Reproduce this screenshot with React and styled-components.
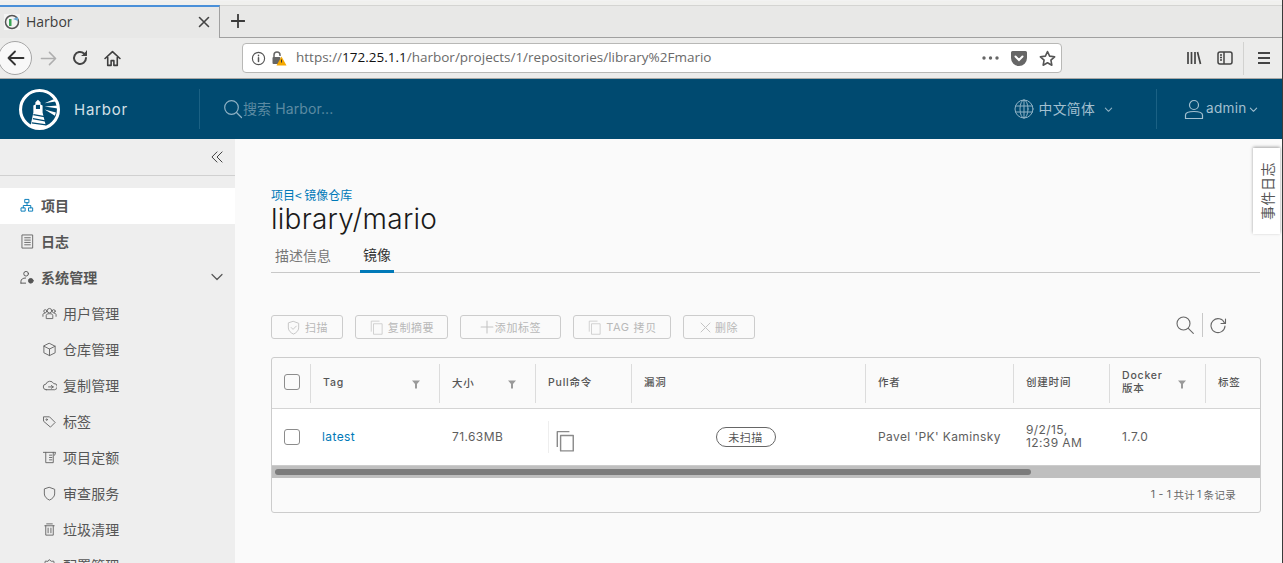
import React from "react";
import styled, { createGlobalStyle } from "styled-components";

const cjk = `"Noto Sans CJK SC", sans-serif`;
const ui = `Inter, "Noto Sans CJK SC", sans-serif`;

const Global = createGlobalStyle`
  html, body { margin: 0; padding: 0; height: 100%; overflow: hidden; background: #fafafa; }
  * { box-sizing: border-box; }
`;

const Page = styled.div`
  width: 1283px; height: 563px; display: flex; flex-direction: column; overflow: hidden;
  font-family: ${ui}; position: relative; border-right: 1px solid #3a3a3a;
`;

/* ---- browser chrome ---- */
const TabStrip = styled.div`
  height: 38px; flex: none; background: #e8e8e7; border-top: 1px solid #f2f2f2;
  display: flex; align-items: stretch; padding-top: 4px; box-shadow: inset 0 4px 0 #f0f0ee, inset 0 5px 0 #d4d4d2;
  border-bottom: 1px solid #a0a0a0;
`;
const BrowserTab = styled.div`
  width: 220px; margin-bottom: -1px; margin-top: 0; background: #e8e8e7; border-top: 2px solid #4a90d9;
  border-right: 1px solid #a0a0a0; display: flex; align-items: center; padding: 0 9px 2px 4px;
  font: 14px "Open Sans", sans-serif; color: #3d3d3d; gap: 6px;
`;
const TabTitle = styled.span` flex: 1; `;
const NewTab = styled.div` width: 36px; display: flex; align-items: center; justify-content: center; `;
const NavBar = styled.div`
  height: 41px; flex: none; background: #ececeb; border-bottom: 1px solid #a8a8a6;
  display: flex; align-items: center; position: relative; padding-left: 32px;
`;
const BackButton = styled.div`
  position: absolute; left: -2px; top: 3px; width: 34px; height: 34px; border-radius: 50%;
  background: #f8f8f8; border: 1px solid #a6a6a6; display: flex; align-items: center; justify-content: center; padding-left: 1px;
`;
const NavIcon = styled.div` width: 32px; height: 32px; display: flex; align-items: center; justify-content: center; `;
const UrlBar = styled.div`
  margin-left: 114px; width: 820px; height: 30px; background: #fff; border: 1px solid #b8b8b6; border-radius: 4px;
  display: flex; align-items: center; padding: 0 5px 0 8px; font: 13.5px "Open Sans", sans-serif; color: #6a6a6a;
`;
const UrlText = styled.div` flex: 1; margin-left: 9px; margin-top: -2px; white-space: nowrap; b { font-weight: 400; color: #111; } `;
const UrlIcons = styled.div` display: flex; align-items: center; gap: 12px; `;
const BrowserRight = styled.div` margin-left: 116px; display: flex; align-items: center; `;
const BrowserIcon = styled.div` width: 31px; display: flex; justify-content: center; `;
const BrowserSep = styled.div` width: 1px; height: 33px; background: #d2d2d0; margin: 0 4px 0 3px; `;

/* ---- app header ---- */
const Header = styled.header`
  height: 60px; flex: none; background: #004a70; display: flex; align-items: center; color: #adc6d4; position: relative;
`;
const Brand = styled.div`
  width: 200px; height: 40px; border-right: 1px solid #1b6184; padding-left: 19px; display: flex; align-items: center; gap: 14px;
  font-size: 15px; letter-spacing: .75px; color: #d3e0e7; flex: none;
`;
const Search = styled.div`
  display: flex; align-items: center; margin-left: 23px; font-size: 14px; color: #5c8aa2; gap: 0; flex: 1; letter-spacing: .1px;
  padding-bottom: 2px; svg { margin-top: 2px; }
`;
const Lang = styled.div`
  display: flex; align-items: center; font-family: ${cjk}; font-size: 13.8px; color: #a3c0d0; letter-spacing: .3px; gap: 5px;
  margin-right: 43px; padding-bottom: 2px; svg { margin-top: 2px; }
`;
const UserBox = styled.div`
  width: 126px; height: 40px; border-left: 1px solid #1b6184; display: flex; align-items: center; padding-left: 27px;
  font-size: 13.6px; color: #a3c0d0; letter-spacing: .3px; gap: 2px; padding-bottom: 2px; svg { margin-top: 2px; }
`;

/* ---- body ---- */
const Body = styled.div` flex: 1; display: flex; min-height: 0; `;
const Side = styled.nav` width: 235px; flex: none; background: #eee; overflow: hidden; `;
const Collapse = styled.div`
  height: 37px; border-bottom: 1px solid #d0d0d0; display: flex; align-items: center; justify-content: flex-end; padding: 0 12px 0 0; margin-bottom: 12px;
`;
const NavItem = styled.div`
  height: 36px; flex: none; display: flex; align-items: center; font-family: ${cjk}; color: #565656;
  background: ${(p) => (p.$active ? "#fff" : "transparent")};
  font-size: 14px; padding-bottom: 2px;
  font-weight: ${(p) => (p.$sub ? 400 : 700)};
  padding-left: ${(p) => (p.$sub ? "42px" : "20px")};
  gap: 6px;
  letter-spacing: .1px;
  svg { flex: none; }
`;
const Chevron = styled.span` margin-left: auto; margin-right: 11px; display: flex; `;

const Main = styled.main` flex: 1; background: #fafafa; padding: 47px 22px 0 36px; min-width: 0; `;
const Crumb = styled.div` font-family: ${cjk}; font-size: 12px; line-height: 18px; color: #0079b8; `;
const Title = styled.h1` margin: 0; font: 300 28px/30px Inter, sans-serif; color: #1a1a1a; letter-spacing: .25px; `;
const Tabs = styled.div`
  display: flex; height: 36px; margin-top: 3px; border-bottom: 1px solid #c8c8c8; padding-left: 4px; font-family: ${cjk}; font-size: 14px;
`;
const TabItem = styled.div`
  color: ${(p) => (p.$active ? "#333" : "#777")}; height: 36px; display: flex; align-items: center; padding: 0 ${(p) => (p.$active ? "2px" : "0")};
  margin-left: ${(p) => (p.$active ? "29px" : "0")}; width: ${(p) => (p.$active ? "34px" : "auto")};
  justify-content: center;
  border-bottom: ${(p) => (p.$active ? "3px solid #0079b8" : "none")};
`;
const Actions = styled.div` display: flex; align-items: center; margin-top: 42px; height: 24px; gap: 12px; `;
const Btn = styled.div`
  height: 24px; width: ${(p) => p.$w}px; border: 1px solid #ccc; border-radius: 3px; color: #b8b8b8; font-family: ${cjk};
  font-size: 11px; display: flex; align-items: center; justify-content: center; gap: ${(p) => (p.$tight ? 1 : 4)}px; letter-spacing: .6px;
`;
const Latin = styled.span` font-family: Inter, sans-serif; `;
const Tools = styled.div` margin-left: auto; margin-right: 33px; margin-bottom: 4px; display: flex; align-items: center; gap: 7px; `;
const ToolSep = styled.div` width: 1px; height: 24px; background: #c8c8c8; `;

const TableBox = styled.div`
  margin-top: 18px; width: 990px; height: 156px; border: 1px solid #ccc; border-radius: 3px; overflow: hidden; background: #fafafa;
`;
const cols = "38px 129px 96px 96px 234px 148px 96px 96px 56px";
const HeadRow = styled.div`
  display: grid; grid-template-columns: ${cols}; height: 51px; border-bottom: 1px solid #d4d4d4; padding-top: 6px;
  font-family: ${ui}; font-size: 10.5px; font-weight: 500; color: #555; letter-spacing: .8px;
`;
const HeadCell = styled.div`
  height: 39px; border-left: ${(p) => (p.$first ? "none" : "1px solid #dcdcdc")}; display: flex; align-items: center;
  padding: 0 ${(p) => (p.$first ? 0 : 18)}px 3px ${(p) => (p.$first ? 0 : 12)}px;
  justify-content: space-between; line-height: 13px;
`;
const SizeHead = styled(HeadCell)` font-family: ${cjk}; `;
const DataRow = styled.div`
  display: grid; grid-template-columns: ${cols}; height: 56px; background: #fff; font-size: 12px; color: #5e5e5e; letter-spacing: .4px; align-items: center;
`;
const DataCell = styled.div`
  padding: 0 0 2px ${(p) => (p.$pad === undefined ? 13 : p.$pad)}px; line-height: 13px;
`;
const Check = styled.div` width: 16px; height: 16px; border: 1px solid #8c8c8c; border-radius: 3px; background: ${(p) => (p.$w ? "#fff" : "transparent")}; margin-left: 12px; `;
const TagLink = styled.span` color: #0079b8; `;
const PillCell = styled.div` display: flex; justify-content: center; padding-right: 5px; `;
const Pill = styled.span`
  border: 1px solid #666; border-radius: 10px; height: 20px; width: 60px; display: flex; align-items: center; justify-content: center;
  font-family: ${cjk}; font-size: 11px; color: #555; letter-spacing: .5px;
`;
const CopyCell = styled.div` border-left: 1px solid #eee; margin-left: 13px; height: 32px; padding: 9px 0 0 5px; `;
const Track = styled.div` height: 13px; background: #bfbfbf; border-top: 1px solid #ccc; padding: 3px 229px 2px 3px; `;
const Thumb = styled.div` height: 6px; border-radius: 3px; background: #7c7c7c; `;
const Foot = styled.div`
  height: 35px; display: flex; align-items: center; justify-content: flex-end; padding: 0 22px 2px 0; font-family: ${ui}; font-size: 10.5px; color: #666; letter-spacing: .3px;
  span { font-family: ${cjk}; margin: 0 2px; }
`;
const EventTab = styled.div`
  position: absolute; right: 2px; top: 148px; width: 27px; height: 86px; background: #fff; box-shadow: 0 1px 3px rgba(0,0,0,.35);
  writing-mode: vertical-rl; text-orientation: sideways; transform: rotate(180deg); display: flex; align-items: center; justify-content: center;
  font-family: ${cjk}; font-size: 14px; color: #555; letter-spacing: 0.5px;
`;

const Ic = ({ s = 16, c = "#666", w = 1, fill = "none", vb = "0 0 16 16", children, style }) => (
  <svg width={s} height={s} viewBox={vb} fill={fill} stroke={c} strokeWidth={w} strokeLinecap="round" strokeLinejoin="round" style={style}>{children}</svg>
);
const Funnel = () => (
  <svg width="10" height="10" viewBox="0 0 10 10" style={{ marginTop: 4 }}><path d="M1 1.500h8L6 5v4.500H4V5z" fill="#9a9a9a" /></svg>
);
const CopyIcon = ({ s = 15, c = "#c4c4c4", w = 1 }) => (
  <Ic s={s} c={c} w={w} vb="0 0 18 20"><path d="M13 1.500H2v14M5 5h11.500v14H5z" strokeLinecap="butt" /></Ic>
);

const sub = [
  ["用户管理", <><circle cx="8" cy="5" r="2.400" /><circle cx="3.500" cy="5.500" r="1.600" /><circle cx="12.500" cy="5.500" r="1.600" /><path d="M4.500 13v-3c0-1 1-1.800 3.500-1.800s3.500.8 3.500 1.800v3zM1 11V9c0-.8 1-1.200 2-1.200M15 11V9c0-.8-1-1.200-2-1.200" /></>],
  ["仓库管理", <path d="M8 1.500l6 3v7l-6 3-6-3v-7zM2 4.500l6 3 6-3M8 7.500v7" />],
  ["复制管理", <><path d="M4.500 12.500a3 3 0 0 1-.3-6A4.500 4.500 0 0 1 12.500 6a3 3 0 0 1 1 6.500h-9z" /><path d="M7 9.500h5M10 8l2 1.500L10 11" /></>],
  ["标签", <><path d="M2 3h6l6 6-5 5-7-6z" /><circle cx="5" cy="6" r=".8" /></>],
  ["项目定额", <><path d="M1.500 2.500h13l-1 3M4 2.500v11h8v-11" /><path d="M8 5.500h2.500M8 8h2.500M8 10.500h2.500" /></>],
  ["审查服务", <path d="M8 1.500l5.500 2v5c0 3-3 5.500-5.500 6.500-2.500-1-5.500-3.500-5.500-6.500v-5z" />],
  ["垃圾清理", <path d="M3 4h10M5 2h6M4 4v10h8V4M6.500 6.500v5M9.500 6.500v5" />],
  ["配置管理", <><path d="M8 2l2 1.500 2.500-.2.500 2.500 2 1.700-1.500 2L14 12l-2.500.500L8 14l-3.500-1.500L2 12l.5-2.500L1 7.500l2-1.700.500-2.500L6 3.500z" /><circle cx="8" cy="8" r="2" /></>],
];

export default function App() {
  return (
    <Page>
      <Global />
      <TabStrip>
        <BrowserTab>
          <svg width="16" height="16" viewBox="0 0 16 16">
            <rect width="16" height="16" fill="#f4f4f4" />
            <circle cx="8" cy="8" r="6.500" fill="none" stroke="#555" strokeWidth="1.500" />
            <rect x="5" y="5" width="2.500" height="7" fill="#3aa655" />
            <path d="M9 5l5-2v4z" fill="#6aa9d4" />
          </svg>
          <TabTitle>Harbor</TabTitle>
          <Ic s={12} c="#444" w={1.600} vb="0 0 12 12"><path d="M1.500 1.500l9 9M10.500 1.500l-9 9" /></Ic>
        </BrowserTab>
        <NewTab>
          <Ic s={14} c="#3a3a3a" w={1.800} vb="0 0 14 14"><path d="M7 .5v13M.5 7h13" /></Ic>
        </NewTab>
      </TabStrip>
      <NavBar>
        <BackButton>
          <Ic s={18} c="#333" w={1.800} vb="0 0 18 18"><path d="M16.500 9h-15M8 2.500L1.500 9 8 15.500" /></Ic>
        </BackButton>
        <NavIcon>
          <Ic s={17} c="#aeaeae" w={1.600} vb="0 0 18 18"><path d="M1.500 9h15M10 2.500L16.500 9 10 15.500" /></Ic>
        </NavIcon>
        <NavIcon>
          <Ic s={16} c="#444" w={2} vb="0 0 16 16"><path d="M14 8a6 6 0 1 1-2-4.500L14 5" /><path d="M14.500 1v4.500H10" fill="#444" strokeWidth="1" /></Ic>
        </NavIcon>
        <NavIcon>
          <Ic s={17} c="#3f3f3f" w={1.500} vb="0 0 16 16"><path d="M1 8l7-6.500L15 8M3.500 7v7.500h3.200V10h2.600v4.500h3.200V7" /></Ic>
        </NavIcon>
        <UrlBar>
          <Ic s={15} c="#555" w={1.200}><circle cx="8" cy="8" r="6.500" /><path d="M8 7.200v4M8 4.500v.6" strokeWidth="1.600" /></Ic>
          <svg width="16" height="16" viewBox="0 0 16 16" style={{ marginLeft: 5 }}>
            <path d="M3 8V5a3 3 0 0 1 6 0v1" fill="none" stroke="#666" strokeWidth="1.500" />
            <rect x="1.500" y="7" width="8" height="7" rx="1" fill="#666" />
            <path d="M10.500 6.500l5 9h-10z" fill="#f5a800" />
            <rect x="10" y="9.500" width="1" height="3" fill="#333" />
          </svg>
          <UrlText>https://<b>172.25.1.1</b>/harbor/projects/1/repositories/library%2Fmario</UrlText>
          <UrlIcons>
            <svg width="17" height="4" viewBox="0 0 17 4" fill="#666"><circle cx="2" cy="2" r="1.700" /><circle cx="8.500" cy="2" r="1.700" /><circle cx="15" cy="2" r="1.700" /></svg>
            <svg width="16" height="15" viewBox="0 0 16 15"><path d="M1.500 0h13A1.500 1.500 0 0 1 16 1.500V7a8 8 0 0 1-16 0V1.500A1.500 1.500 0 0 1 1.500 0z" fill="#666" /><path d="M4.500 5.500L8 9l3.500-3.500" fill="none" stroke="#fff" strokeWidth="2" strokeLinecap="round" /></svg>
            <Ic s={17} c="#555" w={1.500}><path d="M8 1.500l2 4.300 4.700.6-3.500 3.200.9 4.700L8 12l-4.100 2.300.9-4.700L1.300 6.400 6 5.800z" /></Ic>
          </UrlIcons>
        </UrlBar>
        <BrowserRight>
          <BrowserIcon>
            <Ic s={16} c="#444" w={1.700}><path d="M2 2v12M5.500 2v12M9 2v12M11.500 2l3 12" strokeLinecap="butt" /></Ic>
          </BrowserIcon>
          <BrowserIcon>
            <Ic s={16} c="#444" w={1.500}><rect x="1" y="2" width="14" height="12" rx="2" /><path d="M7 2v12M3 5h2M3 7.500h2M3 10h2" strokeLinecap="butt" /></Ic>
          </BrowserIcon>
          <BrowserSep />
          <BrowserIcon>
            <Ic s={14} c="#444" w={1.800} vb="0 0 14 14"><path d="M1 2h12M1 7h12M1 12h12" strokeLinecap="butt" /></Ic>
          </BrowserIcon>
        </BrowserRight>
      </NavBar>
      <Header>
        <Brand>
          <svg width="41" height="41" viewBox="0 0 40 40">
            <circle cx="20" cy="20" r="18.500" fill="none" stroke="#fff" strokeWidth="3" />
            <path d="M11 37l3-14v-7l2-1v-2l2.500-2.500L21 13v2l2 1v7l3.500 14z" fill="#fff" />
            <rect x="16.500" y="15.500" width="4" height="4" fill="#004a70" />
            <path d="M14 25l11 2M13.500 29l12 2M12.500 33l14 2" stroke="#004a70" strokeWidth="1.200" />
            <path d="M25 14l11-5 1 3zM25 17l13-1v3zM25 20l11 3-1 3z" fill="#fff" />
          </svg>
          Harbor
        </Brand>
        <Search>
          <Ic s={20} c="#8fb2c5" w={1.200} vb="0 0 20 20"><circle cx="8.500" cy="8.500" r="6.800" /><path d="M13.500 13.500l5 5" /></Ic>
          搜索 Harbor...
        </Search>
        <Lang>
          <Ic s={20} c="#8fb2c5" w={1} vb="0 0 20 20"><circle cx="10" cy="10" r="9" /><ellipse cx="10" cy="10" rx="4" ry="9" /><path d="M10 1v18M1.500 7h17M1.500 13h17" /></Ic>
          中文简体
          <Ic s={9} c="#8fb2c5" w={1.200} vb="0 0 10 10" style={{ marginLeft: 4 }}><path d="M1.500 3.500L5 7l3.500-3.500" /></Ic>
        </Lang>
        <UserBox>
          <Ic s={20} c="#a3c0d0" w={1.200} vb="0 0 20 20"><circle cx="10" cy="6" r="4.500" /><path d="M1.500 19.500V16c0-2 3-3.500 8.500-3.500s8.500 1.500 8.500 3.500v3.500z" /></Ic>
          admin
          <Ic s={9} c="#a3c0d0" w={1.200} vb="0 0 10 10"><path d="M1.500 3.500L5 7l3.500-3.500" /></Ic>
        </UserBox>
      </Header>
      <Body>
        <Side>
          <Collapse>
            <Ic s={12} c="#333" w={1} vb="0 0 13 13"><path d="M6.500 1L1 6.500 6.500 12M12 1L6.500 6.500 12 12" /></Ic>
          </Collapse>
          <NavItem $active>
            <Ic s={15} c="#0079b8"><path d="M5.500 1.500h4v3.500h-4zM1.500 10.500h4V14h-4zM9.500 10.500h4V14h-4zM7.500 5v3M3.500 10.500V8h8v2.500" /></Ic>
            项目
          </NavItem>
          <NavItem>
            <Ic s={15} c="#666"><path d="M2.500 1h11v14h-11zM5 4h6M5 6.500h6M5 9h6M5 11.500h6" /></Ic>
            日志
          </NavItem>
          <NavItem>
            <Ic s={15} c="#555"><circle cx="6.500" cy="4" r="2.500" /><path d="M1 14v-2c0-2 2-3.500 5-3.500M6 14H1" /><circle cx="11.500" cy="11.500" r="2.500" fill="#555" /></Ic>
            系统管理
            <Chevron><Ic s={14} c="#555" w={1.200} vb="0 0 14 14"><path d="M2 4.500L7 9.500l5-5" /></Ic></Chevron>
          </NavItem>
          {sub.map(([label, icon]) => (
            <NavItem $sub key={label}>
              <Ic s={15} c="#666">{icon}</Ic>
              {label}
            </NavItem>
          ))}
        </Side>
        <Main>
          <Crumb>项目&lt; 镜像仓库</Crumb>
          <Title>library/mario</Title>
          <Tabs>
            <TabItem>描述信息</TabItem>
            <TabItem $active>镜像</TabItem>
          </Tabs>
          <Actions>
            <Btn $w={72}><Ic s={15} c="#c4c4c4"><path d="M8 1.500l5.500 2v5c0 3-3 5.500-5.500 6.500-2.500-1-5.500-3.500-5.500-6.500v-5z" /><path d="M5.500 8l2 2 3.500-3.500" /></Ic>扫描</Btn>
            <Btn $w={93}><CopyIcon />复制摘要</Btn>
            <Btn $w={101} $tight><Ic s={14} c="#c4c4c4" vb="0 0 13 13"><path d="M6.500 1v11M1 6.500h11" /></Ic>添加标签</Btn>
            <Btn $w={98}><CopyIcon /><Latin>TAG</Latin> 拷贝</Btn>
            <Btn $w={72}><Ic s={11} c="#c4c4c4" vb="0 0 11 11"><path d="M1 1l9 9M10 1l-9 9" /></Ic>删除</Btn>
            <Tools>
              <Ic s={20} c="#666" w={1.100} vb="0 0 20 20"><circle cx="8.500" cy="8.500" r="6.500" /><path d="M13.300 13.300l5 5" /></Ic>
              <ToolSep />
              <Ic s={17} c="#666" w={1.100} vb="0 0 17 17"><path d="M14.500 6a7 7 0 1 0 .5 3M15.500 2v4.500H11" /></Ic>
            </Tools>
          </Actions>
          <TableBox>
            <HeadRow>
              <HeadCell $first><Check /></HeadCell>
              <HeadCell>Tag<Funnel /></HeadCell>
              <SizeHead>大小<Funnel /></SizeHead>
              <HeadCell>Pull命令</HeadCell>
              <HeadCell>漏洞</HeadCell>
              <HeadCell>作者</HeadCell>
              <HeadCell>创建时间</HeadCell>
              <HeadCell>
                <span>Docker<br />版本</span><Funnel />
              </HeadCell>
              <HeadCell>标签</HeadCell>
            </HeadRow>
            <DataRow>
              <Check $w />
              <DataCell $pad={12}><TagLink>latest</TagLink></DataCell>
              <DataCell>71.63MB</DataCell>
              <CopyCell><CopyIcon s={22} c="#8a8a8a" w={1.300} /></CopyCell>
              <PillCell><Pill>未扫描</Pill></PillCell>
              <DataCell>Pavel 'PK' Kaminsky</DataCell>
              <DataCell>9/2/15,<br />12:39 AM</DataCell>
              <DataCell>1.7.0</DataCell>
              <DataCell />
            </DataRow>
            <Track><Thumb /></Track>
            <Foot>1 - 1<span>共计</span>1<span>条记录</span></Foot>
          </TableBox>
        </Main>
      </Body>
      <EventTab>事件日志</EventTab>
    </Page>
  );
}
